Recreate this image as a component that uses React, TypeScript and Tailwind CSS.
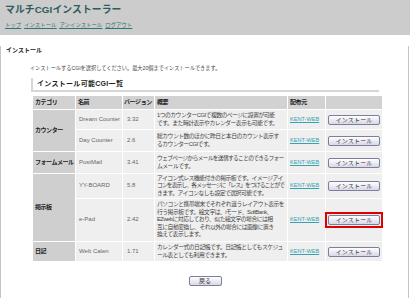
import React from 'react';

type Cgi = {
  name: string;
  version: string;
  lines: string[];
  h: string;
  marked?: boolean;
};

type Group = { category: string; items: Cgi[] };

const groups: Group[] = [
  {
    category: 'カウンター',
    items: [
      {
        name: 'Dream Counter',
        version: '3.32',
        h: 'h-[19px]',
        lines: ['1つのカウンターCGIで複数のページに設置が可能', 'です。また時計表示やカレンダー表示も可能です。'],
      },
      {
        name: 'Day Counter',
        version: '2.6',
        h: 'h-[21px]',
        lines: ['総カウント数のほかに昨日と本日のカウント表示す', 'るカウンターCGIです。'],
      },
    ],
  },
  {
    category: 'フォームメール',
    items: [
      {
        name: 'PostMail',
        version: '3.41',
        h: 'h-[21px]',
        lines: ['ウェブページからメールを送信することのできるフォー', 'ムメールです。'],
      },
    ],
  },
  {
    category: '掲示板',
    items: [
      {
        name: 'YY-BOARD',
        version: '5.8',
        h: 'h-[24px]',
        lines: [
          'アイコン式レス機能付きの掲示板です。イメージアイ',
          'コンを表示し、各メッセージに「レス」をつけることがで',
          'きます。アイコンなしも設定で選択可能です。',
        ],
      },
      {
        name: 'e-Pad',
        version: '2.42',
        h: 'h-[42px]',
        marked: true,
        lines: [
          'パソコンと携帯端末でそれぞれ違うレイアウト表示を',
          '行う掲示板です。絵文字は、iモード、SoftBank、',
          'EZwebに対応しており、似た絵文字の場合には相',
          '互に自動変換し、それ以外の場合には画像に置き',
          '換えて表示します。',
        ],
      },
    ],
  },
  {
    category: '日記',
    items: [
      {
        name: 'Web Calen',
        version: '1.71',
        h: 'h-[19px]',
        lines: ['カレンダー式の日記帳です。日記帳としてもスケジュ', 'ール表としても利用できます。'],
      },
    ],
  },
];

// long lines get squeezed so they stay on one line like the original
const lineClass = (l: string) => {
  const wide = [...l].filter((c) => c.charCodeAt(0) > 0xff).length;
  if (wide >= 26) return 'block whitespace-nowrap tracking-[-0.9px]';
  if (wide >= 25) return 'block whitespace-nowrap tracking-[-0.72px]';
  return 'block whitespace-nowrap';
};

const InstallButton = ({ label }: { label: string }) => (
  <button className="flex h-[10px] w-[52px] items-center justify-center rounded-[2px] border border-[#7d7d9c] bg-gradient-to-b from-[#ffffff] to-[#d8d8e8] text-[6px] leading-none tracking-[0.2px] text-[#333]">
    {label}
  </button>
);

export default function App() {
  return (
    <div
      className="h-[298px] w-[410px] overflow-hidden bg-white text-[#333]"
      style={{ fontFamily: '"Liberation Sans", "Noto Sans CJK JP", sans-serif' }}
    >
      <div className="h-[35px] bg-[#cccccc] px-[5px] pt-[4px]">
        <h1 className="text-[9.8px] font-bold leading-[12px] tracking-[0.1px] text-[#2f5c5c]">
          マルチCGIインストーラー
        </h1>
        <nav className="mt-[6px] flex gap-[3px] text-[5.4px] leading-[7px] text-[#2d7777] underline">
          <a href="#">トップ</a>
          <a href="#">インストール</a>
          <a href="#">アンインストール</a>
          <a href="#">ログアウト</a>
        </nav>
      </div>

      <div className="h-[262px] w-[409px] border-x border-b border-[#c4c4c4]">
        <h2 className="ml-[5px] mt-[11px] text-[6px] font-bold leading-[8px] text-[#222]">インストール</h2>
        <p className="ml-[29px] mt-[11px] text-[5.2px] leading-[7px] text-[#444]">
          インストールするCGIを選択してください。最大20個までインストールできます。
        </p>

        <div className="ml-[30px] mt-[6px] w-[348px]">
          <h3 className="border-b-2 border-l-2 border-[#d6d6d6] pb-[1px] pl-[4px] text-[7px] font-bold leading-[11px] tracking-[0.3px] text-[#222]">
            インストール可能CGI一覧
          </h3>

          <table className="ml-[1px] mt-[3px] w-[348px] table-fixed border-separate border-spacing-[1px] text-[6px] leading-[7.6px]">
            <colgroup>
              <col className="w-[42px]" />
              <col className="w-[46px]" />
              <col className="w-[31px]" />
              <col className="w-[132px]" />
              <col className="w-[37px]" />
              <col className="w-[56px]" />
            </colgroup>
            <thead>
              <tr className="h-[13px] bg-[#d2d2d2] text-left text-[#222]">
                <th className="whitespace-nowrap px-[2px] font-bold tracking-[-0.4px]">カテゴリ</th>
                <th className="whitespace-nowrap px-[2px] font-bold tracking-[-0.4px]">名前</th>
                <th className="whitespace-nowrap px-[1px] font-bold tracking-[-0.4px]">バージョン</th>
                <th className="whitespace-nowrap px-[2px] font-bold tracking-[-0.4px]">概要</th>
                <th className="whitespace-nowrap px-[2px] font-bold tracking-[-0.4px]">配布元</th>
                <th className="px-[2px]"></th>
              </tr>
            </thead>
            <tbody>
              {groups.map((g) =>
                g.items.map((item, i) => (
                  <tr key={item.name} className={item.h}>
                    {i === 0 && (
                      <td
                        rowSpan={g.items.length}
                        className="whitespace-nowrap bg-[#cfcfcf] px-[2px] align-middle text-[6px] font-bold tracking-[-0.45px] text-[#222]"
                      >
                        {g.category}
                      </td>
                    )}
                    <td className="whitespace-nowrap bg-[#efefef] px-[3px] align-middle text-[#666]">{item.name}</td>
                    <td className="bg-[#efefef] px-[4px] align-middle text-[#666]">{item.version}</td>
                    <td className="bg-[#efefef] px-[2px] align-middle text-[5.8px] tracking-[-0.5px] text-[#444]">
                      {item.lines.map((l) => (
                        <span key={l} className={lineClass(l)}>
                          {l}
                        </span>
                      ))}
                    </td>
                    <td className="bg-[#efefef] px-[2px] align-middle">
                      <a href="#" className="text-[5.6px] text-[#33a3b3] underline">
                        KENT-WEB
                      </a>
                    </td>
                    <td className="bg-[#efefef] align-middle">
                      <div className="flex justify-center">
                        {item.marked ? (
                          <div className="border-2 border-[#e00000] p-[1px]">
                            <InstallButton label="インストール" />
                          </div>
                        ) : (
                          <InstallButton label="インストール" />
                        )}
                      </div>
                    </td>
                  </tr>
                )),
              )}
            </tbody>
          </table>

          <div className="mt-[14px] flex justify-center">
            <button className="flex h-[10px] w-[33px] items-center justify-center rounded-[2px] border border-[#7d7d9c] bg-gradient-to-b from-[#ffffff] to-[#d8d8e8] text-[6px] leading-none text-[#333]">
              戻る
            </button>
          </div>
        </div>
      </div>
    </div>
  );
}
